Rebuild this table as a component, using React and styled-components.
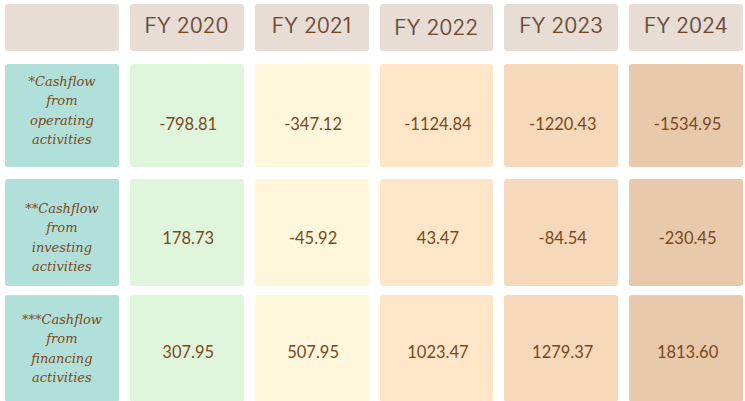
import styled, { createGlobalStyle } from "styled-components";

const GlobalStyle = createGlobalStyle`
  body {
    margin: 0;
    background: #ffffff;
  }
`;

const Table = styled.div`
  width: 738px;
  padding: 4px 0 0 5px;
  display: flex;
  flex-direction: column;
`;

const Row = styled.div`
  display: grid;
  grid-template-columns: repeat(6, 1fr);
  column-gap: 11px;
  height: ${(p) => p.$height}px;
  margin-top: ${(p) => p.$top}px;
`;

const HeadCell = styled.div`
  background: #e8ddd5;
  border-radius: 3px;
  display: flex;
  justify-content: center;
  align-items: center;
  padding-top: ${(p) => p.$drop || 0}px;
  padding-bottom: 5px;
  font-family: "Inter", "Liberation Sans", sans-serif;
  font-weight: 300;
  font-size: 21px;
  color: #7a4719;
  text-shadow: -0.7px 0 #8aa0c4;
`;

const Label = styled.div`
  background: #b1dfd9;
  border-radius: 3px;
  display: flex;
  justify-content: center;
  align-items: center;
  padding-top: ${(p) => Math.max(p.$shift, 0)}px;
  padding-bottom: ${(p) => Math.max(-p.$shift, 0)}px;
  text-align: center;
  font-family: "DejaVu Serif", "Liberation Serif", serif;
  font-style: italic;
  font-size: 13px;
  line-height: 19.5px;
  color: #7b4a22;
  white-space: pre-line;
`;

const Value = styled.div`
  background: ${(p) => p.$bg};
  border-radius: 3px;
  display: flex;
  justify-content: center;
  align-items: center;
  padding-top: ${(p) => p.$pad}px;
  padding-left: 3px;
  font-family: "Lato", "Liberation Sans", sans-serif;
  font-weight: 400;
  font-size: 16.5px;
  color: #7a4820;
`;

const years = ["FY 2020", "FY 2021", "FY 2022", "FY 2023", "FY 2024"];
const shades = ["#e0f6dc", "#fef7dc", "#ffe6c8", "#f6d8ba", "#e8c9ab"];

const rows = [
  {
    label: "*Cashflow\nfrom\noperating\nactivities",
    values: ["-798.81", "-347.12", "-1124.84", "-1220.43", "-1534.95"],
    height: 103,
    top: 13,
    pad: 16,
    shift: -10,
  },
  {
    label: "**Cashflow\nfrom\ninvesting\nactivities",
    values: ["178.73", "-45.92", "43.47", "-84.54", "-230.45"],
    height: 107,
    top: 12,
    pad: 11,
    shift: 10,
  },
  {
    label: "***Cashflow\nfrom\nfinancing\nactivities",
    values: ["307.95", "507.95", "1023.47", "1279.37", "1813.60"],
    height: 107,
    top: 9,
    pad: 6,
    shift: 0,
  },
];

export default function App() {
  return (
    <>
      <GlobalStyle />
      <Table>
        <Row $height={47} $top={0}>
          <HeadCell />
          {years.map((y, i) => (
            <HeadCell key={y} $drop={i === 2 ? 4 : 0}>
              {y}
            </HeadCell>
          ))}
        </Row>
        {rows.map((row) => (
          <Row key={row.label} $height={row.height} $top={row.top}>
            <Label $shift={row.shift}>{row.label}</Label>
            {row.values.map((v, i) => (
              <Value key={i} $bg={shades[i]} $pad={row.pad}>
                {v}
              </Value>
            ))}
          </Row>
        ))}
      </Table>
    </>
  );
}
